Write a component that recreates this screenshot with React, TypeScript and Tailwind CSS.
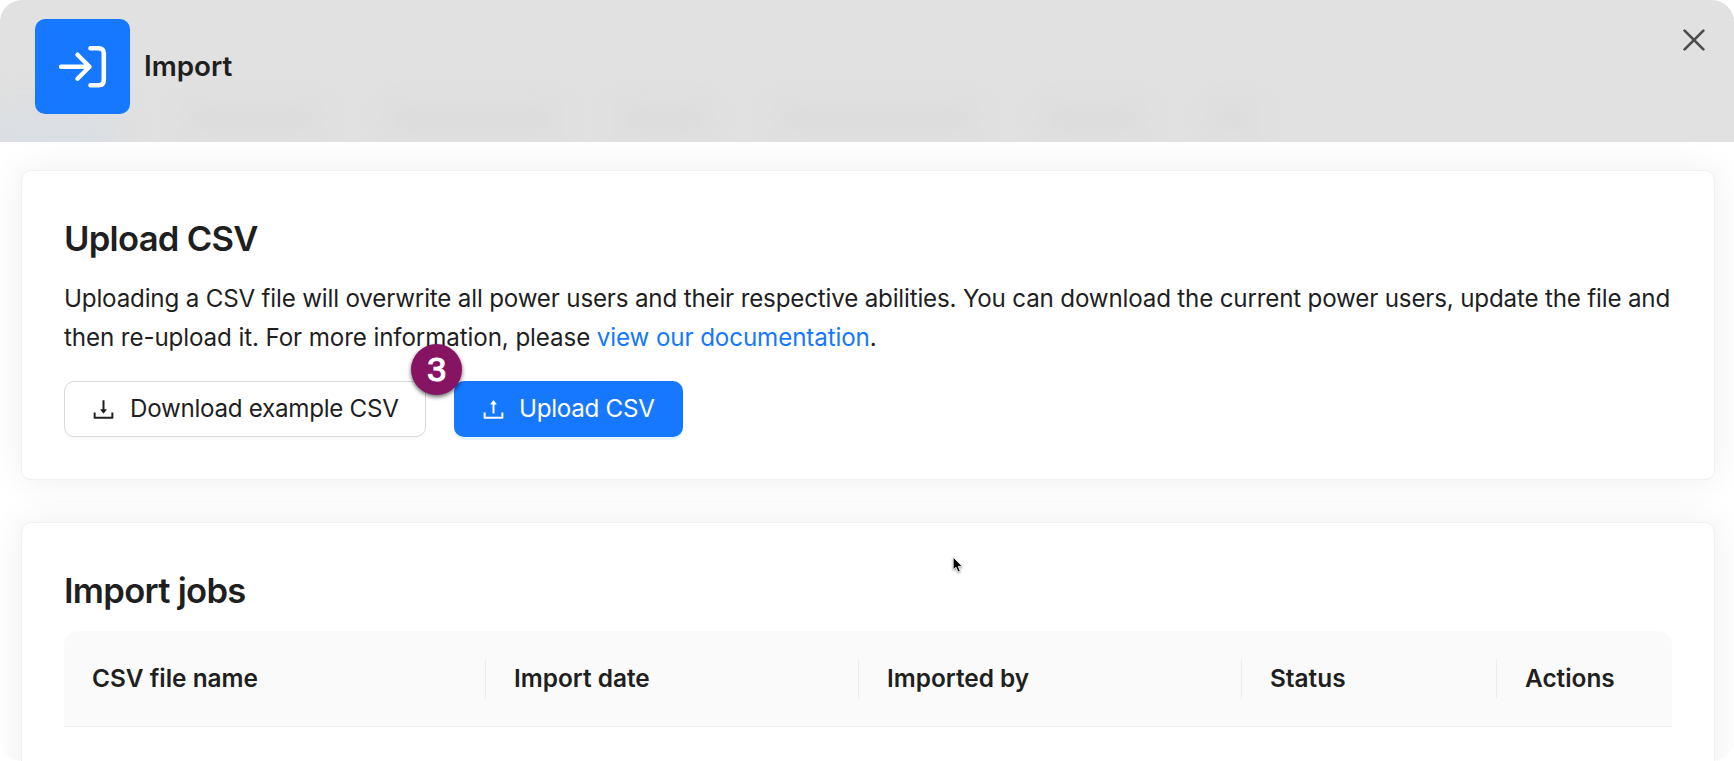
import type { ReactNode } from "react";
import { AiOutlineDownload, AiOutlineUpload } from "react-icons/ai";

// nav labels showing faintly through the frosted header
const ghosts = [
    { left: "left-[184px]", width: "w-[136px]" },
    { left: "left-[388px]", width: "w-[170px]" },
    { left: "left-[618px]", width: "w-[90px]" },
    { left: "left-[776px]", width: "w-[200px]" },
    { left: "left-[1044px]", width: "w-[100px]" },
    { left: "left-[1212px]", width: "w-[42px]" },
];

const columns = [
    { title: "CSV file name", width: "w-[422px]" },
    { title: "Import date", width: "w-[373px]" },
    { title: "Imported by", width: "w-[383px]" },
    { title: "Status", width: "w-[255px]" },
    { title: "Actions", width: "w-[175px]" },
];

function ImportIcon() {
    return (
        <svg width="95" height="95" viewBox="0 0 95 95" fill="none" stroke="white" strokeLinecap="round" strokeLinejoin="round">
            <path d="M26 47.7H54.5M42.5 35.7L54.5 47.7L42.5 59.7" strokeWidth="4.4" />
            <path d="M55.5 29.3H63.5Q68.8 29.3 68.8 34.6V61Q68.8 66.3 63.5 66.3H55.5" strokeWidth="4.6" />
        </svg>
    );
}

function Header() {
    return (
        <header className="relative flex h-[142px] justify-between overflow-hidden bg-[#e1e1e1] pt-[19px] pl-[35px]">
            <div className="absolute top-[108px] -left-5 h-12 w-[140px] bg-[#d6dce4] opacity-60 blur-[16px]" />
            {ghosts.map((ghost) => (
                <div key={ghost.left} className={`absolute top-[108px] h-[22px] bg-[#dadada] blur-[12px] ${ghost.left} ${ghost.width}`} />
            ))}
            <div className="relative flex h-[95px] items-center">
                <div className="size-[95px] rounded-[10px] bg-[#1677ff]">
                    <ImportIcon />
                </div>
                <h1 className="ml-[14px] text-[27.8px] font-semibold whitespace-nowrap">Import</h1>
            </div>
            <button aria-label="Close" className="relative mt-[9px] mr-7 size-6">
                <svg width="24" height="24" viewBox="0 0 24 24" stroke="#4d4d4d" strokeWidth="2.7" strokeLinecap="round">
                    <path d="M2.6 2.6L21.4 21.4M21.4 2.6L2.6 21.4" />
                </svg>
            </button>
        </header>
    );
}

function Card({ title, className, children }: { title: string; className: string; children: ReactNode }) {
    return (
        <section className={`rounded-[10px] border border-[#f0f0f0] bg-white px-[42px] shadow-[0_0_36px_rgba(0,0,0,0.07)] ${className}`}>
            <h2 className="text-[34.6px] leading-[48px] font-semibold tracking-[-0.7px]">{title}</h2>
            {children}
        </section>
    );
}

export default function App() {
    return (
        <div className="h-[761px] w-[1734px] overflow-hidden rounded-[22px] bg-white font-[Inter,'Liberation_Sans',sans-serif] text-[#1f1f1f]">
            <Header />
            <main className="flex flex-col gap-[42px] px-[21px] pt-[28px] pr-[19px]">
                <Card title="Upload CSV" className="h-[310px] pt-[43px]">
                    <p className="mt-[17px] text-[24.2px] leading-[39px] whitespace-nowrap">
                        <span className="tracking-[-0.19px]">
                            Uploading a CSV file will overwrite all power users and their respective abilities. You can download the current power users, update the file and
                        </span>
                        <br />
                        <span className="tracking-[-0.12px]">
                            then re-upload it. For more information, please <a href="#" className="text-[#1677ff]">view our documentation</a>.
                        </span>
                    </p>
                    <div className="relative mt-6 flex gap-7 text-[24.2px] tracking-[-0.29px]">
                        <button className="flex h-14 w-[362px] items-center rounded-[10px] border border-[#d9d9d9] bg-white pl-[25px] whitespace-nowrap shadow-[0_3px_0_rgba(0,0,0,0.02)]">
                            <AiOutlineDownload className="mr-[13px] size-[27px]" />
                            Download example CSV
                        </button>
                        <button className="flex h-14 w-[229px] items-center rounded-[10px] bg-[#1677ff] pl-[26px] whitespace-nowrap text-white shadow-[0_3px_0_rgba(5,145,255,0.1)]">
                            <AiOutlineUpload className="mr-[12px] size-[27px]" />
                            Upload CSV
                        </button>
                        <div className="absolute -top-[37px] left-[347px] flex size-[51px] items-center justify-center rounded-full bg-[#861463] font-['Liberation_Sans',sans-serif] text-[34px] text-white shadow-[0_2px_4px_rgba(0,0,0,0.6)] [-webkit-text-stroke:1.2px_white]">
                            3
                        </div>
                    </div>
                </Card>
                <Card title="Import jobs" className="h-[420px] pt-[43px]">
                    <table className="mt-[17px] w-[1608px] table-fixed border-separate border-spacing-0">
                        <thead>
                            <tr>
                                {columns.map((col, i) => (
                                    <th
                                        key={col.title}
                                        className={`h-24 border-b border-[#f0f0f0] bg-[#fafafa] p-0 text-left text-[24.4px] font-semibold first:rounded-tl-[14px] last:rounded-tr-[14px] ${col.width}`}
                                    >
                                        <div className={`flex h-10 items-center pl-[28px] whitespace-nowrap ${i < columns.length - 1 ? "border-r border-[#ececec]" : ""}`}>
                                            {col.title}
                                        </div>
                                    </th>
                                ))}
                            </tr>
                        </thead>
                    </table>
                </Card>
            </main>
            <svg className="absolute top-[556px] left-[952px] drop-shadow-[0_1px_1px_rgba(0,0,0,0.4)]" width="12" height="18" viewBox="0 0 12 18">
                <path d="M1.2 1.2V13.8L4 11.2L6 16L8.2 15L6.2 10.4H10.2Z" fill="black" stroke="white" strokeWidth="0.8" />
            </svg>
        </div>
    );
}
